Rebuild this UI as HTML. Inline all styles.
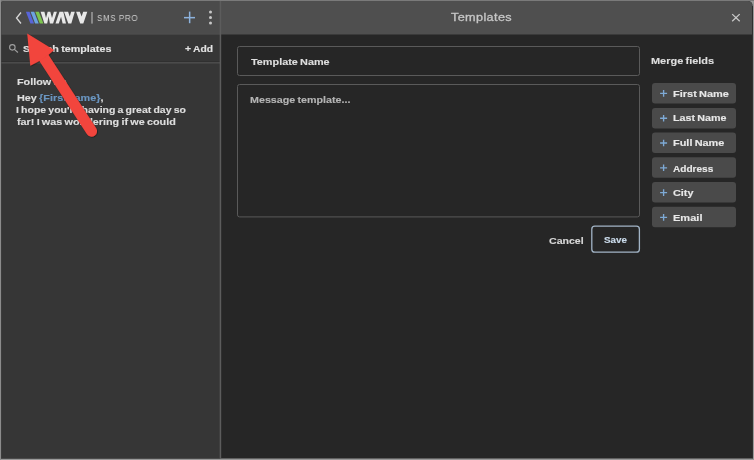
<!DOCTYPE html>
<html><head><meta charset="utf-8">
<style>
*{margin:0;padding:0;box-sizing:border-box}
html,body{width:754px;height:460px;overflow:hidden;background:#9a9a9a}
body{position:relative;font-family:"Liberation Sans",sans-serif}
.abs{position:absolute}
.t{position:absolute;white-space:nowrap;line-height:1;will-change:transform}
.b{font-weight:bold;-webkit-text-stroke:0.14px currentColor}
</style></head><body>
<svg id="struct" class="abs" style="left:0;top:0" width="754" height="460" viewBox="0 0 754 460">
  <rect x="0" y="0" width="754" height="1" fill="#7a7a7a"/>
  <rect x="0" y="0" width="1" height="460" fill="#8c8c8c"/>
  <path d="M1,4 Q1,1 4,1 L747.5,1 Q752.5,1 752.5,6 L752.5,458.5 L1,458.5 Z" fill="#262626"/>
  <path d="M1,4 Q1,1 4,1 L220,1 L220,33.2 L1,33.2 Z" fill="#4b4b4b"/>
  <rect x="1" y="33.2" width="219" height="1.6" fill="#545454"/>
  <path d="M221,1 L747.5,1 Q752.5,1 752.5,6 L752.5,34.4 L221,34.4 Z" fill="#4f4f4f"/>
  <rect x="1" y="34.8" width="219" height="423.7" fill="#363636"/>
  <rect x="1" y="61" width="219" height="1" fill="#303030"/>
  <rect x="1" y="62" width="219" height="1.6" fill="#4b4b4b"/>
  <rect x="219.7" y="1" width="1.5" height="457.5" fill="#5c5c5c"/>
  <rect x="1" y="1" width="0.8" height="457" fill="#444" opacity="0.6"/>
  <rect x="752" y="6" width="0.9" height="452.5" fill="#2a2a2a"/>
</svg>
<!-- header left -->
<svg id="shapes" class="abs" style="left:0;top:0" width="754" height="460" viewBox="0 0 754 460">
  <!-- chevron -->
  <polyline points="21,12.5 16.5,18 21,23.5" fill="none" stroke="#d8d8d8" stroke-width="1.3"/>
  <!-- logo stripes -->
  <polygon points="25.9,11.8 29.5,11.8 34.0,23.6 30.4,23.6" fill="#5865d8"/>
  <polygon points="30.6,11.8 34.2,11.8 38.7,23.6 35.1,23.6" fill="#6ca3e0"/>
  <polygon points="35.3,11.8 38.9,11.8 43.4,23.6 39.8,23.6" fill="#7cc44e"/>
  <!-- W -->
  <polygon points="40.6,11.7 44.4,11.7 46.0,18.0 47.7,11.7 50.3,11.7 52.0,18.0 53.9,11.7 56.9,11.7 53.1,23.5 49.9,23.5 48.6,16.2 47.2,23.5 44.4,23.5" fill="#e8e8e8"/>
  <!-- A (Lambda) -->
  <polygon points="55.5,23.5 59.5,11.7 63.3,11.7 66,23.5 62.6,23.5 61.07,16.8 58.8,23.5" fill="#e8e8e8"/>
  <!-- V -->
  <polygon points="64,11.7 68.1,11.7 69.75,16.4 71.1,11.7 74.8,11.7 71.3,23.5 68.3,23.5" fill="#e8e8e8"/>
  <polygon points="76.1,11.7 79.8,11.7 81.6,16.6 83.2,11.7 87.3,11.7 83.3,23.5 80.2,23.5" fill="#e8e8e8"/>
  <rect x="91.2" y="12" width="1.6" height="11.6" fill="#9a9a9a"/>
  <!-- plus -->
  <rect x="184" y="16.9" width="11" height="1.5" fill="#8db2dc"/>
  <rect x="188.9" y="11.6" width="1.5" height="11.6" fill="#8db2dc"/>
  <!-- dots -->
  <circle cx="210.5" cy="12" r="1.5" fill="#c8c8c8"/>
  <circle cx="210.5" cy="17.6" r="1.5" fill="#c8c8c8"/>
  <circle cx="210.5" cy="22.9" r="1.5" fill="#c8c8c8"/>
  <!-- search icon -->
  <circle cx="12.35" cy="47.35" r="2.75" fill="none" stroke="#a0a0a0" stroke-width="1.1"/>
  <line x1="14.4" y1="49.4" x2="17.9" y2="52.5" stroke="#a0a0a0" stroke-width="1.2"/>
  <!-- close X -->
  <line x1="732.2" y1="14.1" x2="739.7" y2="21.2" stroke="#cacaca" stroke-width="1.25"/>
  <line x1="739.7" y1="14.1" x2="732.2" y2="21.2" stroke="#cacaca" stroke-width="1.25"/>
  <!-- inputs -->
  <rect x="237.5" y="46.5" width="402" height="29" rx="2" fill="none" stroke="#5a5a5a" stroke-width="1"/>
  <rect x="237.5" y="84.5" width="402" height="132.4" rx="2" fill="none" stroke="#5a5a5a" stroke-width="1"/>
  <rect x="591.8" y="226.2" width="47.6" height="26" rx="3" fill="none" stroke="#a2b4c6" stroke-width="1.3"/>
  <!-- merge buttons -->
  <rect x="652" y="83" width="84" height="20.5" rx="3" fill="#4a4a4a"/>
  <rect x="652" y="108" width="84" height="20.5" rx="3" fill="#4a4a4a"/>
  <rect x="652" y="132.5" width="84" height="20.5" rx="3" fill="#4a4a4a"/>
  <rect x="652" y="157.2" width="84" height="20.5" rx="3" fill="#4a4a4a"/>
  <rect x="652" y="182" width="84" height="20.5" rx="3" fill="#4a4a4a"/>
  <rect x="652" y="206.8" width="84" height="20.5" rx="3" fill="#4a4a4a"/>
  <path d="M660.1,93.40 H667.1 M663.6,90.10 V96.70" stroke="#7eaad6" stroke-width="1.35" fill="none"/>
  <path d="M660.1,118.20 H667.1 M663.6,114.90 V121.50" stroke="#7eaad6" stroke-width="1.35" fill="none"/>
  <path d="M660.1,143.00 H667.1 M663.6,139.70 V146.30" stroke="#7eaad6" stroke-width="1.35" fill="none"/>
  <path d="M660.1,167.80 H667.1 M663.6,164.50 V171.10" stroke="#7eaad6" stroke-width="1.35" fill="none"/>
  <path d="M660.1,192.60 H667.1 M663.6,189.30 V195.90" stroke="#7eaad6" stroke-width="1.35" fill="none"/>
  <path d="M660.1,217.40 H667.1 M663.6,214.10 V220.70" stroke="#7eaad6" stroke-width="1.35" fill="none"/>
</svg>
<div class="t" style="left:97.2px;top:13.6px;font-size:9.25px;letter-spacing:0.75px;color:#d0d0d0;transform:scaleX(0.86);transform-origin:0 0">SMS PRO</div>
<div class="t b" style="left:22.8px;top:44.00px;font-size:9.5px;word-spacing:-0.7px;color:#e2e2e2;transform:scaleX(1.134);transform-origin:0 0">Search templates</div>
<div class="t b" style="left:185px;top:44.00px;font-size:9.5px;color:#e2e2e2;transform:scaleX(1.1);transform-origin:0 0">+</div>
<div class="t b" style="left:192.7px;top:44.00px;font-size:9.5px;word-spacing:-0.7px;color:#e2e2e2;transform:scaleX(1.082);transform-origin:0 0">Add</div>
<div class="t b" style="left:16.5px;top:77.00px;font-size:9.5px;word-spacing:-0.7px;color:#dedede;transform:scaleX(1.135);transform-origin:0 0">Follow up</div>
<div class="t b" style="left:16.5px;top:93.00px;font-size:9.5px;word-spacing:-0.7px;color:#dedede;transform:scaleX(1.140);transform-origin:0 0">Hey <span style="color:#6a96c2">{FirstName}</span>,</div>
<div class="t b" style="left:16.4px;top:104.70px;font-size:9.5px;word-spacing:-0.7px;color:#dedede;transform:scaleX(1.106);transform-origin:0 0">I hope you're having a great day so</div>
<div class="t b" style="left:16.9px;top:117.00px;font-size:9.5px;word-spacing:-0.7px;color:#dedede;transform:scaleX(1.139);transform-origin:0 0">far! I was wondering if we could</div>
<div class="t" style="left:450.8px;top:11.8px;font-size:10.75px;letter-spacing:0.3px;color:#c6c6c6;-webkit-text-stroke:0.3px #c6c6c6;transform:scaleX(1.18);transform-origin:0 0">Templates</div>
<div class="t b" style="left:250.8px;top:57.00px;font-size:9.5px;word-spacing:-0.7px;color:#dedede;transform:scaleX(1.143);transform-origin:0 0">Template Name</div>
<div class="t b" style="left:250.2px;top:95.20px;font-size:9.5px;word-spacing:-0.7px;color:#b4b4b4;transform:scaleX(1.128);transform-origin:0 0">Message template...</div>
<div class="t b" style="left:548.9px;top:235.70px;font-size:9.5px;word-spacing:-0.7px;color:#d8d8d8;transform:scaleX(1.113);transform-origin:0 0">Cancel</div>
<div class="t b" style="left:603.5px;top:234.50px;font-size:9.5px;word-spacing:-0.7px;color:#cadaea;transform:scaleX(1.037);transform-origin:0 0">Save</div>
<div class="t b" style="left:650.8px;top:56.00px;font-size:9.5px;word-spacing:-0.7px;color:#dedede;transform:scaleX(1.153);transform-origin:0 0">Merge fields</div>
<div class="t b" style="left:672.9px;top:89.40px;font-size:9.5px;word-spacing:-0.7px;color:#e8e8e8;transform:scaleX(1.156);transform-origin:0 0">First Name</div>
<div class="t b" style="left:672.9px;top:113.20px;font-size:9.5px;word-spacing:-0.7px;color:#e8e8e8;transform:scaleX(1.129);transform-origin:0 0">Last Name</div>
<div class="t b" style="left:672.9px;top:138.40px;font-size:9.5px;word-spacing:-0.7px;color:#e8e8e8;transform:scaleX(1.150);transform-origin:0 0">Full Name</div>
<div class="t b" style="left:672.9px;top:163.50px;font-size:9.5px;word-spacing:-0.7px;color:#e8e8e8;transform:scaleX(1.061);transform-origin:0 0">Address</div>
<div class="t b" style="left:672.9px;top:188.40px;font-size:9.5px;word-spacing:-0.7px;color:#e8e8e8;transform:scaleX(1.137);transform-origin:0 0">City</div>
<div class="t b" style="left:672.9px;top:213.00px;font-size:9.5px;word-spacing:-0.7px;color:#e8e8e8;transform:scaleX(1.162);transform-origin:0 0">Email</div>
<!-- arrow -->
<svg id="arrow" class="abs" style="left:0;top:0" width="754" height="460" viewBox="0 0 754 460">
  <defs><filter id="sh" x="-20%" y="-20%" width="140%" height="140%"><feDropShadow dx="0.6" dy="0.6" stdDeviation="0.7" flood-color="#000" flood-opacity="0.55"/></filter></defs>
  <g filter="url(#sh)">
  <line x1="44" y1="58" x2="91.6" y2="131.2" stroke="#f2443c" stroke-width="11" stroke-linecap="round"/>
  <polygon points="27.2,33.4 54,50 48.3,54.9 44,58 39.4,61.1 30.3,65.8" fill="#f2443c"/>
  </g>
</svg>
</body></html>
